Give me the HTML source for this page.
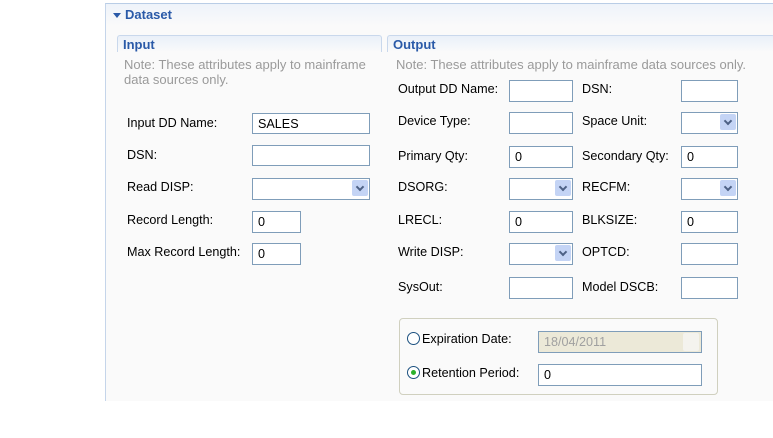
<!DOCTYPE html>
<html><head><style>
body{margin:0;width:773px;height:438px;background:#fff;font-family:"Liberation Sans",sans-serif;font-size:12.6px;color:#000;position:relative;overflow:hidden}
.a{position:absolute}
.panel{left:105px;top:3px;width:668px;height:397px;background:#fafafa;border-left:1px solid #c5d5ea;border-top:1px solid #b9cde6}
.hdr{left:106px;top:4px;width:667px;height:22px;background:linear-gradient(#eef3fa,#fafafa)}
.sec{border:1px solid #c9d8ec;border-bottom:none;border-radius:3px 3px 0 0;background:linear-gradient(#e9f0f9,#fafafa);height:16px}
.t{color:#2a5aa8;font-weight:bold;font-size:13px}
.note{color:#9a9a9a;line-height:15px;font-size:13px}
.in{border:1px solid #7f9db9;background:#fff;height:20px;box-sizing:border-box;padding:3px 0 0 5px;font-size:12.6px}
.cb::after{content:"";position:absolute;right:1px;top:1px;width:16px;height:16px;background:#c4d4f5;border-radius:2px}
.cb::before{content:"";position:absolute;right:6px;top:5px;width:4px;height:4px;border-right:2px solid #4d6185;border-bottom:2px solid #4d6185;transform:rotate(45deg);z-index:2}
.rad{width:11px;height:11px;border:1px solid #1c5180;border-radius:50%;background:#fff}
</style></head><body>
<div class="a panel"></div>
<div class="a hdr"></div>
<div class="a" style="left:113px;top:13px;width:0;height:0;border-left:4px solid transparent;border-right:4px solid transparent;border-top:5px solid #2a5aa8"></div>
<div class="a t" style="left:125px;top:7px">Dataset</div>

<div class="a sec" style="left:117px;top:35px;width:263px"></div>
<div class="a t" style="left:123px;top:37px">Input</div>
<div class="a note" style="left:124px;top:57px">Note: These attributes apply to mainframe<br>data sources only.</div>

<div class="a sec" style="left:387px;top:35px;width:386px"></div>
<div class="a t" style="left:393px;top:37px">Output</div>
<div class="a note" style="left:396px;top:57px">Note: These attributes apply to mainframe data sources only.</div>

<div class="a" style="left:127px;top:116px">Input DD Name:</div>
<div class="a in" style="left:252px;top:113px;width:118px;height:21px">SALES</div>
<div class="a" style="left:127px;top:148px">DSN:</div>
<div class="a in" style="left:252px;top:145px;width:118px;height:21px"></div>
<div class="a" style="left:127px;top:180px">Read DISP:</div>
<div class="a in cb" style="left:252px;top:178px;width:118px;height:22px"></div>
<div class="a" style="left:127px;top:213px">Record Length:</div>
<div class="a in" style="left:252px;top:211px;width:49px;height:22px">0</div>
<div class="a" style="left:127px;top:245px">Max Record Length:</div>
<div class="a in" style="left:252px;top:243px;width:49px;height:22px">0</div>

<div class="a" style="left:398px;top:82px">Output DD Name:</div>
<div class="a in" style="left:509px;top:80px;width:64px;height:22px"></div>
<div class="a" style="left:398px;top:114px">Device Type:</div>
<div class="a in" style="left:509px;top:112px;width:64px;height:22px"></div>
<div class="a" style="left:398px;top:149px">Primary Qty:</div>
<div class="a in" style="left:509px;top:146px;width:64px;height:22px">0</div>
<div class="a" style="left:398px;top:180px">DSORG:</div>
<div class="a in cb" style="left:509px;top:178px;width:64px;height:22px"></div>
<div class="a" style="left:398px;top:213px">LRECL:</div>
<div class="a in" style="left:509px;top:211px;width:64px;height:22px">0</div>
<div class="a" style="left:398px;top:245px">Write DISP:</div>
<div class="a in cb" style="left:509px;top:243px;width:64px;height:22px"></div>
<div class="a" style="left:398px;top:280px">SysOut:</div>
<div class="a in" style="left:509px;top:277px;width:64px;height:22px"></div>

<div class="a" style="left:582px;top:82px">DSN:</div>
<div class="a in" style="left:681px;top:80px;width:57px;height:22px"></div>
<div class="a" style="left:582px;top:114px">Space Unit:</div>
<div class="a in cb" style="left:681px;top:112px;width:57px;height:22px"></div>
<div class="a" style="left:582px;top:149px">Secondary Qty:</div>
<div class="a in" style="left:681px;top:146px;width:57px;height:22px">0</div>
<div class="a" style="left:582px;top:180px">RECFM:</div>
<div class="a in cb" style="left:681px;top:178px;width:57px;height:22px"></div>
<div class="a" style="left:582px;top:213px">BLKSIZE:</div>
<div class="a in" style="left:681px;top:211px;width:57px;height:22px">0</div>
<div class="a" style="left:582px;top:245px">OPTCD:</div>
<div class="a in" style="left:681px;top:243px;width:57px;height:22px"></div>
<div class="a" style="left:582px;top:280px">Model DSCB:</div>
<div class="a in" style="left:681px;top:277px;width:57px;height:22px"></div>

<div class="a" style="left:399px;top:318px;width:317px;height:75px;border:1px solid #d0d0bf;border-radius:4px"></div>
<div class="a rad" style="left:407px;top:332px"></div>
<div class="a" style="left:422px;top:332px">Expiration Date:</div>
<div class="a in" style="left:538px;top:331px;width:164px;height:22px;background:#ece9d8;color:#a0a0a0">18/04/2011</div>
<div class="a" style="left:683px;top:333px;width:16px;height:18px;background:#f4f3ee;border-radius:2px"></div>
<div class="a rad" style="left:407px;top:366px"></div>
<div class="a" style="left:411px;top:370px;width:5px;height:5px;border-radius:50%;background:#2bb02b"></div>
<div class="a" style="left:422px;top:366px">Retention Period:</div>
<div class="a in" style="left:538px;top:364px;width:164px;height:22px">0</div>
</body></html>
